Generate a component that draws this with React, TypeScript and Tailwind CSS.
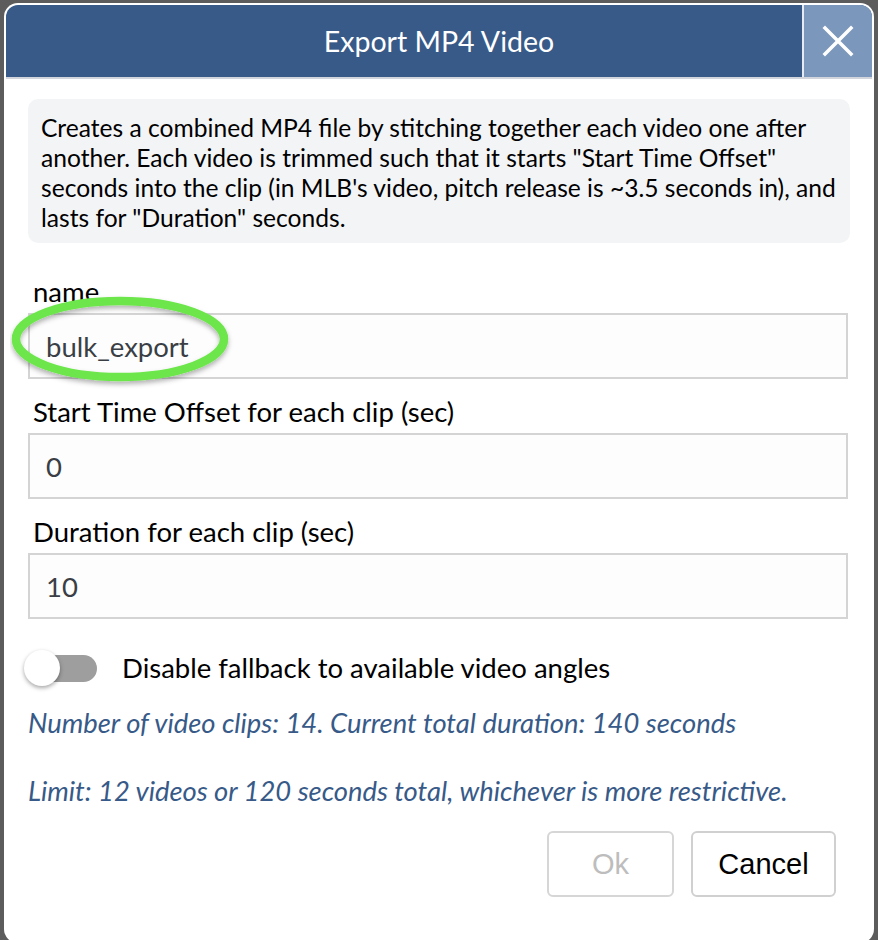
import { useState } from 'react';

const lato = { fontFamily: 'Lato, "Open Sans", sans-serif' };

function Field({ label, value }: { label: string; value: string }) {
  return (
    <div>
      <label className="block pl-[5px] text-[27.5px] leading-[30px] text-black">{label}</label>
      <input
        readOnly
        value={value}
        className="mt-[6px] block h-[66px] w-full border-2 border-[#d4d4d4] bg-[#fdfdfd] px-[16px] text-[27.5px] text-[#3a3f45] outline-none"
      />
    </div>
  );
}

export default function App() {
  const [noFallback, setNoFallback] = useState(false);

  return (
    <div className="h-[940px] w-full overflow-hidden bg-[#5c5c5c] px-[4px] pt-[3px]" style={lato}>
      <div className="relative h-[940px] rounded-[14px] bg-white p-[2px]">
        <div className="flex h-[74px] overflow-hidden rounded-t-[12px] border-b-2 border-[#d2d6dc] bg-[#375a88]">
          <h1 className="flex flex-1 items-center justify-center pl-[70px] text-[28.5px] text-white">Export MP4 Video</h1>
          <button className="flex w-[70px] items-center justify-center border-l-2 border-[#e6ebf1] bg-[#7b97bb]">
            <svg width="32" height="32" viewBox="0 0 32 32" fill="none" stroke="white" strokeWidth="3.5" strokeLinecap="square">
              <path d="M3 3L29 29M29 3L3 29" />
            </svg>
          </button>
        </div>

        <div className="px-[22px] pt-[20px]">
          <p className="rounded-[10px] bg-[#f3f4f6] pb-[10px] pl-[13px] pr-[2px] pt-[14px] text-[24.6px] leading-[30px] text-black">
            Creates a combined MP4 file by stitching together each video one after another. Each video is trimmed such
            that it starts "Start Time Offset" seconds into the clip (in MLB's video, pitch release is ~3.5 seconds in),
            and lasts for "Duration" seconds.
          </p>

          <div className="mt-[34px] flex flex-col gap-[18px] pr-[2px]">
            <Field label="name" value="bulk_export" />
            <Field label="Start Time Offset for each clip (sec)" value="0" />
            <Field label="Duration for each clip (sec)" value="10" />
          </div>

          <div className="-ml-[4px] mt-[28px] flex items-center">
            <button onClick={() => setNoFallback(!noFallback)} className="relative h-[36px] w-[73px]">
              <span className="absolute left-[16px] top-[5px] h-[27px] w-[57px] rounded-full bg-[#9e9e9e]" />
              <span className="absolute left-0 top-0 h-[36px] w-[36px] rounded-full bg-white shadow-[0_2px_4px_rgba(0,0,0,0.35)]" />
            </button>
            <span className="ml-[25px] text-[27.5px] text-black">Disable fallback to available video angles</span>
          </div>

          <p className="mt-[20px] text-[27.4px] italic leading-[30px] text-[#375a88]">
            Number of video clips: 14. Current total duration: 140 seconds
          </p>
          <p className="mt-[38px] text-[27.4px] italic leading-[30px] text-[#375a88]">
            Limit: 12 videos or 120 seconds total, whichever is more restrictive.
          </p>

          <div className="mt-[25px] flex justify-end gap-[17px] pr-[14px]" style={{ fontFamily: '"Liberation Sans", Arial, sans-serif' }}>
            <button disabled className="h-[66px] w-[127px] rounded-[6px] border-2 border-[#d6d6d6] bg-white text-[29px] text-[#bdbdbd]">
              Ok
            </button>
            <button className="h-[66px] w-[145px] rounded-[6px] border-2 border-[#d0d0d0] bg-white text-[29px] text-black">
              Cancel
            </button>
          </div>
        </div>

        <svg className="pointer-events-none absolute left-[6px] top-[290px]" width="230" height="98" viewBox="0 0 230 98">
          <defs>
            <filter id="ring-shadow" x="-10%" y="-20%" width="120%" height="150%">
              <feDropShadow dx="0" dy="3" stdDeviation="2.5" floodColor="#000" floodOpacity="0.3" />
            </filter>
          </defs>
          <ellipse cx="110" cy="46" rx="104" ry="38" fill="none" stroke="#6ce64b" strokeWidth="8.5" filter="url(#ring-shadow)" />
        </svg>
      </div>
    </div>
  );
}
